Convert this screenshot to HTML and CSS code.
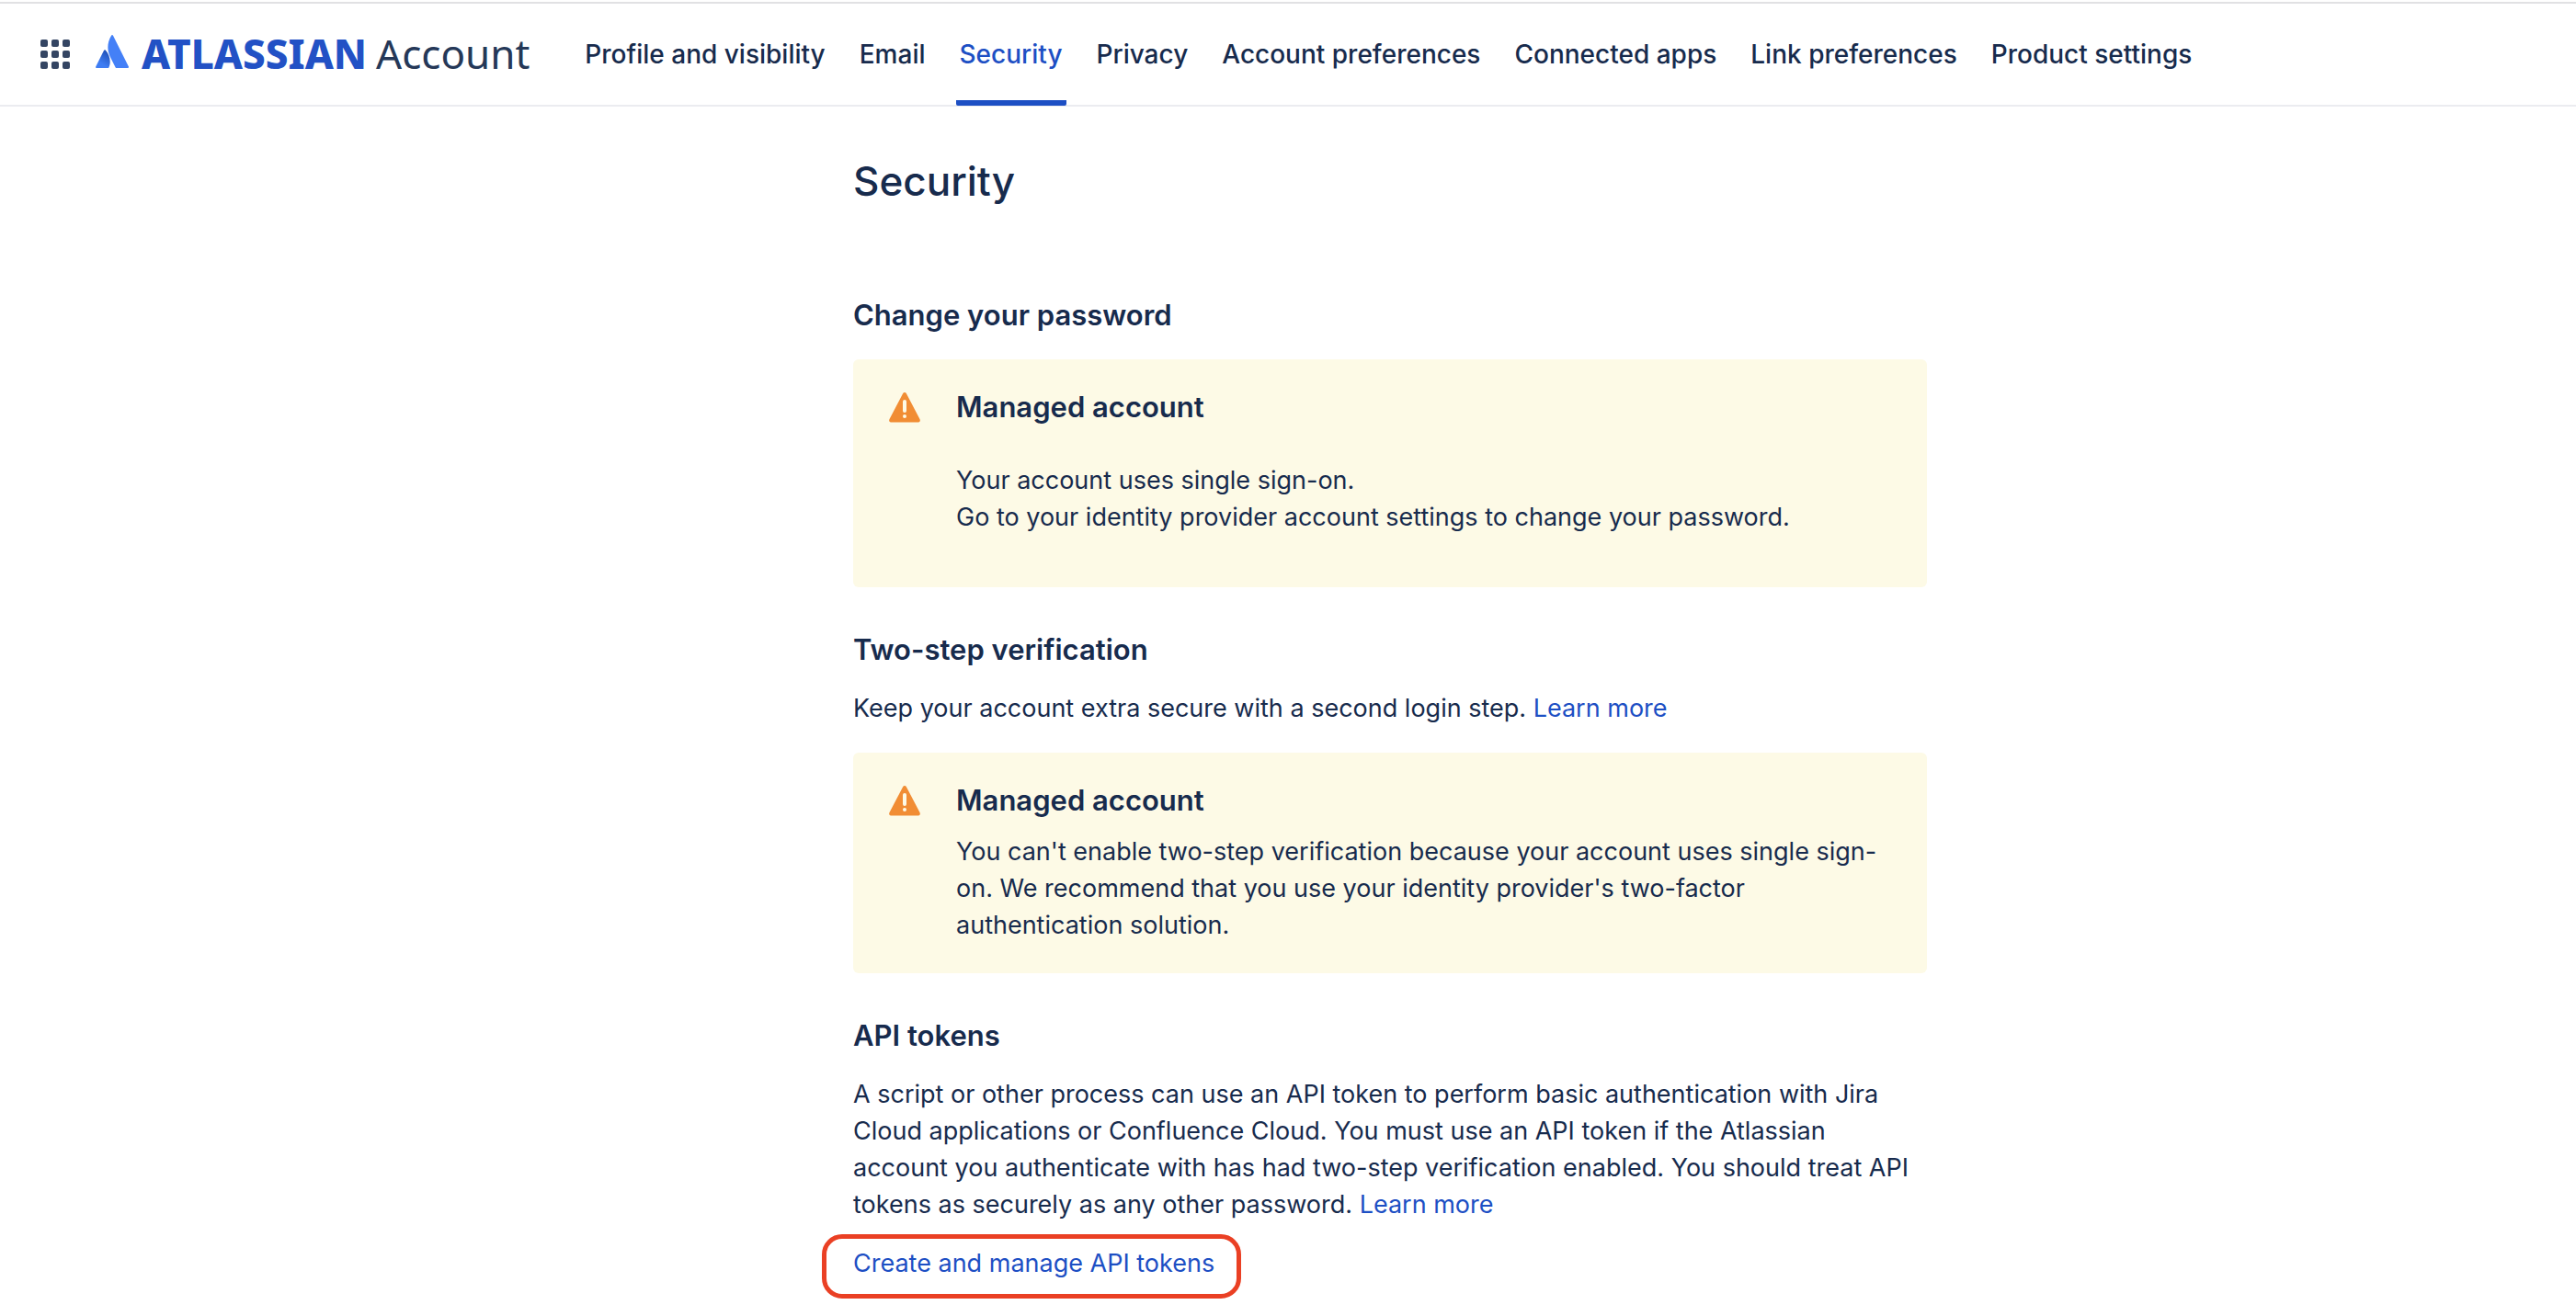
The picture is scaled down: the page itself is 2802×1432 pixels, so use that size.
FILE: index.html
```html
<!DOCTYPE html>
<html lang="en">
<head>
<meta charset="utf-8">
<meta name="viewport" content="width=device-width, initial-scale=1">
<title>Security - Atlassian Account</title>
<link rel="stylesheet" href="styles.css">
</head>
<body>
<header class="topbar">
  <button class="switcher" type="button" aria-label="Switch apps">
    <svg width="32" height="32" viewBox="0 0 32 32" fill="#344563" aria-hidden="true">
      <rect x="0" y="0" width="8" height="8" rx="2"/><rect x="12" y="0" width="8" height="8" rx="2"/><rect x="24" y="0" width="8" height="8" rx="2"/>
      <rect x="0" y="12" width="8" height="8" rx="2"/><rect x="12" y="12" width="8" height="8" rx="2"/><rect x="24" y="12" width="8" height="8" rx="2"/>
      <rect x="0" y="24" width="8" height="8" rx="2"/><rect x="12" y="24" width="8" height="8" rx="2"/><rect x="24" y="24" width="8" height="8" rx="2"/>
    </svg>
  </button>
  <a class="brand" href="#">
    <svg class="brand-mark" width="36" height="36" viewBox="0 0 36 36" aria-hidden="true">
      <defs>
        <linearGradient id="mark" x1="14" y1="19" x2="6" y2="31" gradientUnits="userSpaceOnUse">
          <stop offset="0" stop-color="#1f50b8"/><stop offset="1" stop-color="#3f7df3"/>
        </linearGradient>
      </defs>
      <path fill="url(#mark)" d="M10.700 16.600c-.5-.6-1.200-.6-1.600.2L.2 34.500c-.4.800.1 1.500.9 1.500h12.300c.4 0 .8-.2 1-.6 2.700-5.500 1.100-13.900-3.700-18.800z"/>
      <path fill="#4480f7" d="M17.200.6c-5 7.900-4.700 16.600-1.400 23.100l5.900 11.700c.2.400.6.600 1 .6h12.300c.8 0 1.300-.8.900-1.500L18.900.6c-.4-.8-1.300-.8-1.700 0z"/>
    </svg>
    <span class="brand-name">ATLASSIAN</span>
    <span class="brand-product">Account</span>
  </a>
  <nav class="tabs" aria-label="Account settings">
    <a class="tab" href="#">Profile and visibility</a>
    <a class="tab" href="#">Email</a>
    <a class="tab tab-current" href="#" aria-current="page">Security</a>
    <a class="tab" href="#">Privacy</a>
    <a class="tab" href="#">Account preferences</a>
    <a class="tab" href="#">Connected apps</a>
    <a class="tab" href="#">Link preferences</a>
    <a class="tab" href="#">Product settings</a>
  </nav>
</header>
<main class="page">
  <div class="content">
    <h1 class="title">Security</h1>

    <section class="section">
      <h2 class="heading">Change your password</h2>
      <div class="notice">
        <svg class="notice-icon" width="48" height="40" viewBox="0 4 48 40" aria-hidden="true">
          <path fill="#f18d34" d="M25.900 9.200 40.600 37.200C41.300 38.800 40.500 40.400 38.800 40.400H9.200C7.500 40.400 6.700 38.800 7.400 37.200L22.100 9.200C22.900 7.600 25.100 7.600 25.900 9.200Z"/>
          <path fill="none" stroke="#fdfae6" stroke-width="4" stroke-linecap="round" d="M24 18v10"/>
          <circle cx="24" cy="34" r="2" fill="#fdfae6"/>
        </svg>
        <div class="notice-body">
          <h3 class="heading">Managed account</h3>
          <p class="text notice-spaced">Your account uses single sign-on.<br>Go to your identity provider account settings to change your password.</p>
        </div>
      </div>
    </section>

    <section class="section">
      <h2 class="heading">Two-step verification</h2>
      <p class="text">Keep your account extra secure with a second login step. <a class="link" href="#">Learn more</a></p>
      <div class="notice">
        <svg class="notice-icon" width="48" height="40" viewBox="0 4 48 40" aria-hidden="true">
          <path fill="#f18d34" d="M25.900 9.200 40.600 37.200C41.300 38.800 40.500 40.400 38.800 40.400H9.200C7.500 40.400 6.700 38.800 7.400 37.200L22.100 9.200C22.900 7.600 25.100 7.600 25.900 9.200Z"/>
          <path fill="none" stroke="#fdfae6" stroke-width="4" stroke-linecap="round" d="M24 18v10"/>
          <circle cx="24" cy="34" r="2" fill="#fdfae6"/>
        </svg>
        <div class="notice-body">
          <h3 class="heading">Managed account</h3>
          <p class="text">You can't enable two-step verification because your account uses single sign-on. We recommend that you use your identity provider's two-factor authentication solution.</p>
        </div>
      </div>
    </section>

    <section class="section">
      <h2 class="heading">API tokens</h2>
      <p class="text">A script or other process can use an API token to perform basic authentication with Jira Cloud applications or Confluence Cloud. You must use an API token if the Atlassian account you authenticate with has had two-step verification enabled. You should treat API tokens as securely as any other password. <a class="link" href="#">Learn more</a></p>
      <p class="text action"><a class="link" href="#">Create and manage API tokens</a></p>
    </section>
  </div>
</main>
</body>
</html>
```

FILE: styles.css
```css
* {
  box-sizing: border-box;
}

body {
  margin: 0;
  background: #fff;
  color: #172b4d;
  font-family: Inter, "Liberation Sans", sans-serif;
  font-size: 27px;
  line-height: 40px;
}

h1, h2, h3, p {
  margin: 0;
}

a {
  color: inherit;
  text-decoration: none;
}

.topbar {
  display: flex;
  align-items: stretch;
  height: 114px;
  margin-top: 2px;
  padding-left: 36px;
  border-top: 2px solid #e1e1e3;
  border-bottom: 2px solid #ebecf0;
}

.switcher {
  display: flex;
  align-items: center;
  padding: 0 8px;
  border: 0;
  background: none;
}

.brand {
  display: flex;
  align-items: center;
  margin-left: 20px;
  padding-bottom: 2px;
  white-space: nowrap;
}

.brand-mark {
  margin-bottom: 4px;
}

.brand-name {
  margin-left: 14px;
  color: #2251c5;
  font-family: "Noto Sans", sans-serif;
  font-size: 44px;
  font-weight: 800;
}

.brand-product {
  margin-left: 10px;
  color: #253858;
  font-family: "Noto Sans", sans-serif;
  font-size: 44px;
}

.tabs {
  display: flex;
  gap: 29px;
  margin-left: 56px;
  margin-bottom: -1px;
}

.tab {
  display: flex;
  align-items: center;
  padding: 4px 4px 0;
  border-bottom: 6px solid transparent;
  border-radius: 2px;
  font-size: 28px;
  font-weight: 500;
  white-space: nowrap;
}

.tab-current {
  border-bottom-color: #1d4fc4;
  color: #1d4fc4;
}

.page {
  padding: 53px 0 16px 222px;
}

.content {
  max-width: 1168px;
  margin: 0 auto;
}

.title {
  margin-bottom: 98px;
  font-size: 44px;
  font-weight: 500;
  line-height: 56px;
}

.section {
  display: flex;
  flex-direction: column;
  gap: 24px;
  margin-bottom: 48px;
}

.heading {
  font-size: 31px;
  font-weight: 600;
  line-height: 40px;
}

.notice {
  display: flex;
  gap: 32px;
  margin-top: 4px;
  padding: 32px;
  border-radius: 6px;
  background: #fdfae6;
}

.notice-icon {
  flex: none;
}

.notice-body {
  flex: 1;
  min-width: 0;
}

.notice-body .text {
  margin-top: 16px;
}

.notice-body .notice-spaced {
  margin: 40px 0 24px;
}

.link {
  color: #1d4fc4;
}

.action {
  position: relative;
  align-self: flex-start;
}

.action::after {
  content: "";
  position: absolute;
  inset: -12px -29px -18px -34px;
  border: 5px solid #ea4024;
  border-radius: 22px;
  pointer-events: none;
}
```
